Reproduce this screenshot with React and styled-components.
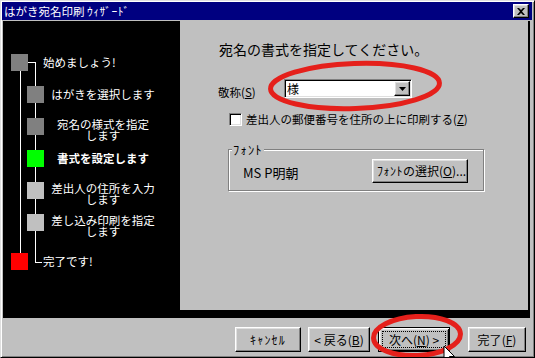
import React from 'react';
import styled, { createGlobalStyle, css } from 'styled-components';

const GlobalStyle = createGlobalStyle`
  html, body {
    margin: 0;
    padding: 0;
    background: #c0c0c0;
  }
  body {
    font-family: "Noto Sans CJK JP", "Noto Sans", sans-serif;
    color: #000;
  }
`;

const raised = css`
  border: 1px solid;
  border-color: #ffffff #000000 #000000 #ffffff;
  box-shadow: inset -1px -1px 0 #808080, inset 1px 1px 0 #dfdfdf;
`;

const sunken = css`
  border: 1px solid;
  border-color: #808080 #ffffff #ffffff #808080;
  box-shadow: inset 1px 1px 0 #000000, inset -1px -1px 0 #dfdfdf;
`;

const Window = styled.div`
  position: relative;
  width: 535px;
  height: 358px;
  box-sizing: border-box;
  background: #c0c0c0;
  border: 1px solid;
  border-color: #dfdfdf #000000 #000000 #dfdfdf;
  box-shadow: inset 1px 1px 0 #ffffff, inset -1px -1px 0 #808080;
  padding: 1px 2px 1px 1px;
  display: flex;
  flex-direction: column;
  overflow: hidden;
`;

const TitleBar = styled.div`
  height: 18px;
  flex-shrink: 0;
  background: #000080;
  display: flex;
  align-items: center;
  justify-content: space-between;
  padding: 0 3px 0 2px;
`;

const TitleText = styled.span`
  color: #ffffff;
  font-size: 11.5px;
  line-height: 14px;
  white-space: nowrap;
`;

// half-width katakana sit wider in the old bitmap font
const Hankaku = styled.span`
  letter-spacing: ${(p) => p.$ls || 1}px;
`;

const CloseButton = styled.div`
  width: 16px;
  height: 14px;
  box-sizing: border-box;
  background: #c0c0c0;
  ${raised};
  display: flex;
  align-items: center;
  justify-content: center;
`;

const Body = styled.div`
  height: 297px;
  flex-shrink: 0;
  box-sizing: border-box;
  margin: 1px 2px 0 1px;
  padding-bottom: 8px;
  background: #000000;
  display: flex;
`;

const Tree = styled.div`
  position: relative;
  width: 177px;
  flex-shrink: 0;
  padding-top: 33px;
  box-sizing: border-box;
`;

const TreeLines = styled.svg`
  position: absolute;
  left: 0;
  top: 0;
  pointer-events: none;
`;

const Step = styled.div`
  display: flex;
  align-items: flex-start;
  height: 32px;
  margin-left: ${(p) => (p.$sub ? 24 : 8)}px;
  margin-top: ${(p) => p.$mt || 0}px;
`;

const Square = styled.div`
  position: relative;
  width: 17px;
  height: 17px;
  flex-shrink: 0;
  background: ${(p) => p.$color};
`;

const StepText = styled.div`
  color: #ffffff;
  font-size: 11.5px;
  line-height: 11px;
  white-space: nowrap;
  font-weight: ${(p) => (p.$bold ? 700 : 400)};
  ${(p) =>
    p.$sub
      ? css`
          width: 106px;
          margin-left: 6px;
          text-align: center;
          padding-top: ${p.$lines > 1 ? 1 : 3}px;
        `
      : css`
          margin-left: 15px;
          padding-top: 3px;
        `}
`;

const Panel = styled.div`
  flex: 1;
  background: #c0c0c0;
  margin-right: 2px;
  padding: 20px 0 0 38px;
  font-size: 11.5px;
`;

const Heading = styled.div`
  font-size: 14px;
  line-height: 16px;
  margin-left: 1px;
  white-space: nowrap;
`;

const HonorRow = styled.div`
  display: flex;
  align-items: flex-end;
  margin-top: 22px;
`;

const FieldLabel = styled.span`
  width: 66px;
  line-height: 14px;
  margin-bottom: -1px;
  white-space: nowrap;
`;

const Combo = styled.div`
  width: 128px;
  height: 19px;
  box-sizing: border-box;
  background: #ffffff;
  ${sunken};
  display: flex;
  align-items: center;
  justify-content: space-between;
  padding: 0 1px 0 2px;
  font-size: 12px;
`;

const DropButton = styled.div`
  width: 16px;
  height: 15px;
  box-sizing: border-box;
  background: #c0c0c0;
  ${raised};
  display: flex;
  align-items: center;
  justify-content: center;
`;

const CheckRow = styled.label`
  display: flex;
  align-items: center;
  margin: 15px 0 0 11px;
  line-height: 13px;
  white-space: nowrap;
`;

const CheckBox = styled.span`
  width: 13px;
  height: 13px;
  box-sizing: border-box;
  background: #ffffff;
  ${sunken};
  margin-right: 4px;
  flex-shrink: 0;
`;

const Group = styled.fieldset`
  width: 256px;
  height: 48px;
  box-sizing: border-box;
  margin: 17px 0 0 10px;
  padding: 0 15px 0 3px;
  border: 1px solid #808080;
  box-shadow: 1px 1px 0 #ffffff, inset 1px 1px 0 #ffffff;
`;

const GroupLegend = styled.legend`
  padding: 0 1px;
  font-size: 12.5px;
  line-height: 13px;
  background: #c0c0c0;
`;

const FontRow = styled.div`
  display: flex;
  align-items: center;
  margin: 3px 0 0 11px;
`;

const FontName = styled.span`
  flex: 1;
  font-size: 13px;
  line-height: 16px;
  padding-top: 3px;
  white-space: nowrap;
`;

const Button = styled.button`
  width: ${(p) => p.$w}px;
  height: ${(p) => p.$h || 25}px;
  margin-right: ${(p) => p.$mr || 0}px;
  box-sizing: border-box;
  padding: 0;
  background: #c0c0c0;
  color: #000000;
  font-family: inherit;
  font-size: 12px;
  display: flex;
  flex-shrink: 0;
  ${(p) =>
    p.$default
      ? css`
          border: 1px solid #000000;
          box-shadow: inset 1px 1px 0 #ffffff, inset -1px -1px 0 #000000,
            inset 2px 2px 0 #dfdfdf, inset -2px -2px 0 #808080;
        `
      : raised};
`;

const ButtonLabel = styled.span`
  flex: 1;
  align-self: stretch;
  margin: 3px;
  display: flex;
  align-items: center;
  justify-content: center;
  white-space: nowrap;
  line-height: 14px;
  border: 1px dotted ${(p) => (p.$focus ? '#000000' : 'transparent')};
`;

const Footer = styled.div`
  flex: 1;
  display: flex;
  justify-content: flex-end;
  align-items: flex-start;
  padding: 9px 6px 0 0;
`;

const Overlay = styled.svg`
  position: absolute;
  left: 0;
  top: 0;
  pointer-events: none;
`;

const steps = [
  { label: ['はがきを選択します'], color: '#808080' },
  { label: ['宛名の様式を指定', 'します'], color: '#808080' },
  { label: ['書式を設定します'], color: '#00ff00', bold: true },
  { label: ['差出人の住所を入力', 'します'], color: '#c0c0c0' },
  { label: ['差し込み印刷を指定', 'します'], color: '#c0c0c0' },
];

const Key = ({ k }) => (
  <>
    (<u>{k}</u>)
  </>
);

export default function App() {
  return (
    <>
      <GlobalStyle />
      <Window>
        <TitleBar>
          <TitleText>
            はがき宛名印刷 <Hankaku $ls={0.5}>ｳｨｻﾞｰﾄﾞ</Hankaku>
          </TitleText>
          <CloseButton>
            <svg width="8" height="7" viewBox="0 0 8 7">
              <path d="M0 0h2l2 2 2-2h2L5 3.5 8 7H6L4 5 2 7H0l3-3.5z" fill="#000" />
            </svg>
          </CloseButton>
        </TitleBar>

        <Body>
          <Tree>
            <TreeLines width="177" height="289">
              <g stroke="#ffffff" strokeWidth="1" fill="none" shapeRendering="crispEdges">
                <line x1="17.5" y1="50" x2="17.5" y2="232" />
                <line x1="25" y1="41.5" x2="33" y2="41.5" />
                <line x1="32.5" y1="41" x2="32.5" y2="242" />
                <line x1="32" y1="241.5" x2="39" y2="241.5" />
              </g>
            </TreeLines>
            <Step>
              <Square $color="#808080" />
              <StepText>始めましょう!</StepText>
            </Step>
            {steps.map((s) => (
              <Step $sub key={s.label[0]}>
                <Square $color={s.color} />
                <StepText $sub $bold={s.bold} $lines={s.label.length}>
                  {s.label.map((l) => (
                    <div key={l}>{l}</div>
                  ))}
                </StepText>
              </Step>
            ))}
            <Step $mt={7}>
              <Square $color="#ff0000" />
              <StepText>完了です!</StepText>
            </Step>
          </Tree>

          <Panel>
            <Heading>宛名の書式を指定してください。</Heading>
            <HonorRow>
              <FieldLabel>
                敬称<Key k="S" />
              </FieldLabel>
              <Combo>
                <span>様</span>
                <DropButton>
                  <svg width="7" height="4" viewBox="0 0 7 4">
                    <path d="M0 0h7L3.5 4z" fill="#000" />
                  </svg>
                </DropButton>
              </Combo>
            </HonorRow>
            <CheckRow>
              <CheckBox />
              差出人の郵便番号を住所の上に印刷する<Key k="Z" />
            </CheckRow>
            <Group>
              <GroupLegend>
                <Hankaku $ls={1.2}>ﾌｫﾝﾄ</Hankaku>
              </GroupLegend>
              <FontRow>
                <FontName>MS P明朝</FontName>
                <Button $w={96} $h={24}>
                  <ButtonLabel>
                    <Hankaku $ls={0.5}>ﾌｫﾝﾄ</Hankaku>の選択<Key k="O" />...
                  </ButtonLabel>
                </Button>
              </FontRow>
            </Group>
          </Panel>
        </Body>

        <Footer>
          <Button $w={66} $mr={7}>
            <ButtonLabel>
              <Hankaku $ls={1.2}>ｷｬﾝｾﾙ</Hankaku>
            </ButtonLabel>
          </Button>
          <Button $w={62} $mr={8}>
            <ButtonLabel>
              &lt; 戻る<Key k="B" />
            </ButtonLabel>
          </Button>
          <Button $w={72} $mr={18} $default>
            <ButtonLabel $focus>
              次へ<Key k="N" /> &gt;
            </ButtonLabel>
          </Button>
          <Button $w={58}>
            <ButtonLabel>
              完了<Key k="F" />
            </ButtonLabel>
          </Button>
        </Footer>

        <Overlay width="535" height="358">
          <g fill="none" stroke="#e5201b" strokeWidth="5">
            <ellipse cx="354" cy="85" rx="84.5" ry="22.5" transform="rotate(-2 354 85)" />
            <ellipse cx="416" cy="335" rx="43.5" ry="19.5" transform="rotate(-3 416 335)" />
          </g>
          <path
            d="M443 345v15l3.5-3.5 3 6.5 2-1-3-6.5h5z"
            fill="#ffffff"
            stroke="#000000"
            strokeWidth="1"
            strokeLinejoin="miter"
          />
        </Overlay>
      </Window>
    </>
  );
}
